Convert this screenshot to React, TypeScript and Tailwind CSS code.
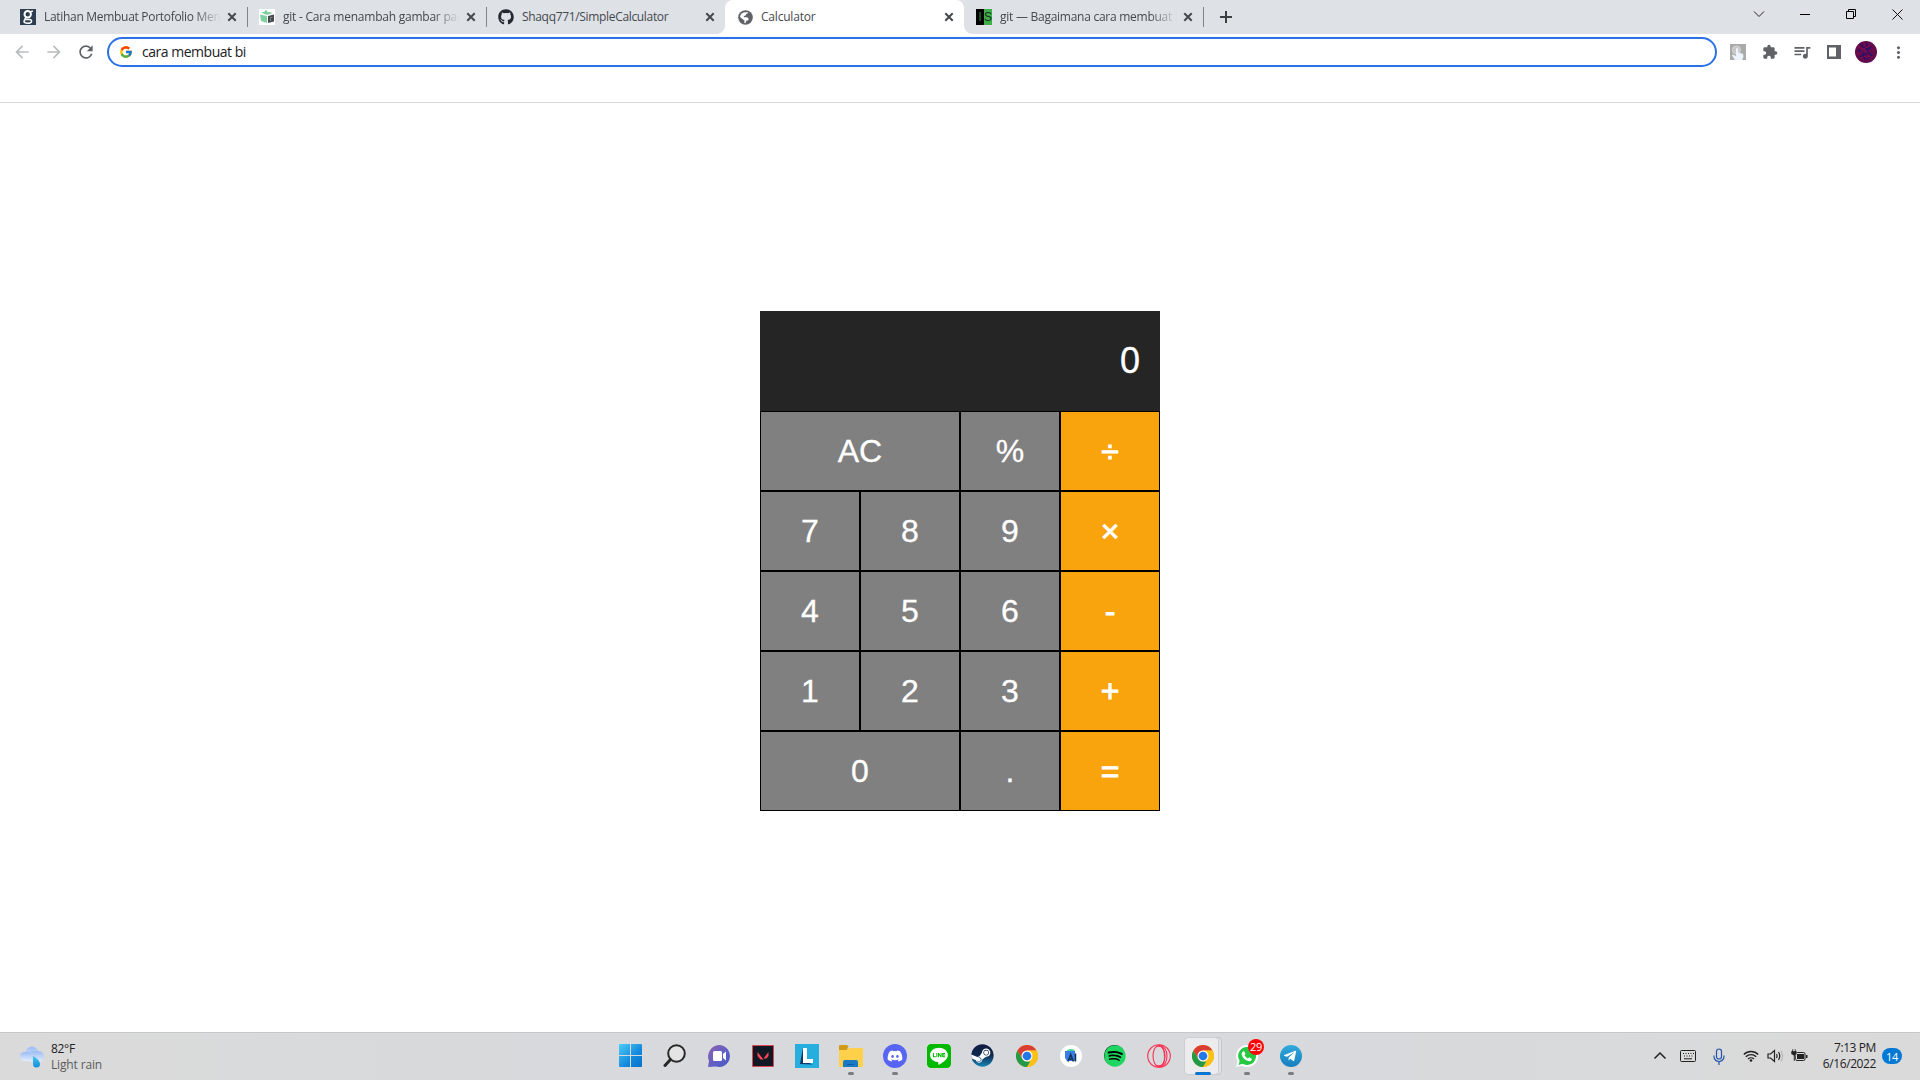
import type { ReactNode } from 'react';
import { FaDiscord, FaGithub, FaLine, FaSpotify, FaSteam, FaTelegramPlane } from 'react-icons/fa';
import { FcGoogle } from 'react-icons/fc';
import { MdArrowBack, MdArrowForward, MdExtension, MdMoreVert, MdQueueMusic, MdRefresh } from 'react-icons/md';

function Cross() {
  return (
    <svg width="16" height="16" viewBox="0 0 16 16" stroke="#45494d" strokeWidth="2" className="shrink-0">
      <path d="M4.3 4.3l7.4 7.4M11.7 4.3l-7.4 7.4" />
    </svg>
  );
}

const favicons: ReactNode[] = [
  <svg width="16" height="16" viewBox="0 0 16 16" fill="none" stroke="#fff" strokeWidth="2">
    <path fill="#2d3e50" stroke="none" d="M0 0h16v16H0z" />
    <circle cx="7.700" cy="5.300" r="3.200" />
    <path d="M10 3l2.800-1M6 8.500q-2 1.500 0 2h3.500q2.500.3 2 2.200-.6 1.600-3.700 1.600-3.800 0-3.800-2 0-1.500 2-1.800" strokeWidth="1.500" />
  </svg>,
  <svg width="16" height="16" viewBox="0 0 16 16">
    <path fill="#fff" d="M0 0h16v16H0z" />
    <path fill="#7fcea0" d="M1 5.500l7 1.500v7l-6-2zM2 3.500l4-1V1h1l1 1.500 6 1.500-6 2z" />
    <path fill="#474a4d" d="M9 7l6-1.500v7L9 14z" />
    <path d="M11 9l2.500-.8M11.500 12V9.500" stroke="#81868a" />
  </svg>,
  <FaGithub size={16} color="#24292f" />,
  <svg width="15" height="15" viewBox="0 0 15 15">
    <circle cx="7.500" cy="7.500" r="7.300" fill="#5f6368" />
    <path fill="#fff" d="M7 2.200h3.200q-.4 1.600-2 1.700L7.600 5.500 6 6l-.3 1.200h3.500l1.600 1.800-.6 1.200-1.900.5-.8 2.600-1.200-.6.200-2.300-3.300-2.500L2 7q.2-4 5-4.800z" />
  </svg>,
  <div className="flex h-4 w-4 bg-black font-['Liberation_Sans',sans-serif] text-[13px] leading-[16px]">
    <span className="w-2 text-center text-[#287a37]">I</span>
    <span className="w-2 bg-[#41ad4b] text-center text-[12px] text-[#0d3817]">S</span>
  </div>,
];

const tabs = [
  { title: 'Latihan Membuat Portofolio Men', w: 'tracking-[-0.3px]', fade: true, sep: true },
  { title: 'git - Cara menambah gambar pad', w: 'tracking-[-0.23px]', fade: true, sep: true },
  { title: 'Shaqq771/SimpleCalculator', w: 'tracking-[-0.33px]', fade: false, sep: false },
  { title: 'Calculator', w: 'tracking-[-0.2px]', fade: false, sep: false },
  { title: 'git — Bagaimana cara membuat f', w: 'tracking-[-0.26px]', fade: true, sep: true },
];

function TabStrip() {
  return (
    <div className="flex h-[34px] bg-[#dee1e6] pl-2">
      {tabs.map((t, i) => {
        const active = i === 3;
        return (
          <div
            key={i}
            className={`relative flex h-[34px] w-[239px] shrink-0 items-center pr-[7px] pl-3 ${active ? 'rounded-t-lg bg-white' : ''}`}
          >
            {active && (
              <>
                <span className="absolute bottom-0 -left-2 h-2 w-2 bg-[radial-gradient(circle_at_0_0,#dee1e6_7.5px,white_8px)]" />
                <span className="absolute -right-2 bottom-0 h-2 w-2 bg-[radial-gradient(circle_at_100%_0,#dee1e6_7.5px,white_8px)]" />
              </>
            )}
            <span className="flex h-4 w-4 shrink-0 items-center justify-center">{favicons[i]}</span>
            <span
              className={`ml-2 h-[18px] w-[180px] text-[12px] leading-[18px] whitespace-nowrap text-[#45494e] ${
                t.fade ? '[mask-image:linear-gradient(to_right,black_150px,transparent_177px)]' : ''
              } ${t.w}`}
            >
              {t.title}
            </span>
            <Cross />
            {t.sep && <span className="absolute top-[7px] -right-px h-5 w-px bg-[#808488]" />}
          </div>
        );
      })}
      <svg width="16" height="16" viewBox="0 0 16 16" className="mt-[9px] ml-[15px]" stroke="#3c4043" strokeWidth="2">
        <path d="M2 8h12M8 2v12" />
      </svg>
      <div className="ml-auto flex h-7 items-center">
        <span className="flex w-[46px] justify-center">
          <svg width="12" height="12" viewBox="0 0 12 12" fill="none" stroke="#222">
            <path d="M1 3.5l5 5 5-5" />
          </svg>
        </span>
        <span className="flex w-[46px] justify-center">
          <span className="h-px w-[10px] bg-black" />
        </span>
        <span className="flex w-[46px] justify-center">
          <svg width="10" height="10" viewBox="0 0 10 10" fill="none" stroke="#000">
            <path d="M.5 2.5h7v7h-7zM2.5 2.5v-2h7v7h-2" />
          </svg>
        </span>
        <span className="flex w-[46px] justify-center">
          <svg width="11" height="11" viewBox="0 0 11 11" stroke="#111">
            <path d="M.5.5l10 10M10.5.5l-10 10" />
          </svg>
        </span>
      </div>
    </div>
  );
}

function Slot({ children }: { children: ReactNode }) {
  return <span className="flex w-8 shrink-0 items-center justify-center">{children}</span>;
}

function Toolbar() {
  return (
    <div className="h-[69px] border-b border-[#d9dadc] bg-white pt-[3px]">
      <div className="flex h-[30px] items-center pr-[6px] pl-[6px]">
        <Slot><MdArrowBack size={20} color="#babcbe" /></Slot>
        <Slot><MdArrowForward size={20} color="#babcbe" /></Slot>
        <Slot><MdRefresh size={20} color="#5f6368" /></Slot>
        <div className="ml-[5px] flex h-[30px] w-[1610px] items-center rounded-full border-2 border-[#2a72e5] pl-[10px]">
          <FcGoogle size={14} />
          <span className="ml-[9px] text-[14px] leading-[20px] tracking-[-0.48px] text-[#202124]">cara membuat bi</span>
        </div>
        <div className="ml-[5px] flex">
          <Slot>
            <svg width="16" height="16" viewBox="0 0 16 16">
              <path fill="#aaa" d="M0 0h16v16H0z" />
              <circle cx="6.500" cy="6" r="4" fill="#c6c6c6" stroke="#d8d8d8" />
              <path fill="#edf3fc" d="M6 4.500q1.200-1.200 2.200 0v4l5 1.500q1 3-1 6H5l-3-4.500 1-1 3 1.500z" />
            </svg>
          </Slot>
          <Slot><MdExtension size={16} color="#5f6368" /></Slot>
          <Slot><MdQueueMusic size={20} color="#5f6368" /></Slot>
          <Slot>
            <svg width="14" height="14" viewBox="0 0 14 14">
              <path fill="#5f6368" d="M0 0h14v14H0z" />
              <path fill="#fff" d="M2 2.500h7v9H2z" />
            </svg>
          </Slot>
          <Slot>
            <svg width="22" height="22" viewBox="0 0 22 22">
              <circle cx="11" cy="11" r="11" fill="#640b4b" />
              <g fill="none" stroke="#23106f" strokeWidth="1.300">
                <path d="M6 3l7 8 5 5M3 9l5 3 2 7M12 2l-1 5 5 3M16 5l-5 8-7 3M12 19l3-5" />
              </g>
              <g fill="none" stroke="#a00c43" strokeWidth="1" strokeDasharray="2 2">
                <path d="M3 6l5 2 7-4M2 13l7-3 9-1M5 17l6-2 7 1M9 3l1 6 6 8" />
              </g>
            </svg>
          </Slot>
          <Slot><MdMoreVert size={19} color="#5f6368" /></Slot>
        </div>
      </div>
    </div>
  );
}

const keys = ['AC', '%', '÷', '7', '8', '9', '×', '4', '5', '6', '-', '1', '2', '3', '+', '0', '.', '='];

function Calculator() {
  return (
    <div className="w-[400px] font-['Liberation_Sans',Arial,sans-serif] text-white">
      <div className="flex h-[100px] items-center justify-end bg-[#252525] pr-5 text-[36px] leading-none [-webkit-text-stroke:0.3px_white]">0</div>
      <div className="grid grid-cols-4">
        {keys.map((k) => (
          <button
            key={k}
            className={`h-20 border border-black text-[32px] leading-none ${
              k === 'AC' || k === '0' ? 'col-span-2' : ''
            } ${
              '÷×-+='.includes(k)
                ? 'bg-[#f9a30d] pb-px [-webkit-text-stroke:0.9px_white]'
                : 'bg-[#808080] [-webkit-text-stroke:0.3px_white]'
            }`}
          >
            {k}
          </button>
        ))}
      </div>
    </div>
  );
}

function ChromeIcon() {
  return (
    <svg width="22" height="22" viewBox="0 0 48 48">
      <circle cx="24" cy="24" r="24" fill="#fbc116" />
      <path fill="#dc3d32" d="M3.200 12A24 24 0 0 1 44.800 12H24L13.600 30z" />
      <path fill="#249a48" d="M3.200 12l10.400 18L24 36h10.400L24 48A24 24 0 0 1 3.200 12z" />
      <path fill="#fbc116" d="M44.800 12A24 24 0 0 1 24 48l10.400-18L36 24l-12-12z" />
      <circle cx="24" cy="24" r="12" fill="#fff" />
      <circle cx="24" cy="24" r="9.500" fill="#2479e8" />
    </svg>
  );
}

const apps: { icon: ReactNode; open?: boolean }[] = [
  {
    icon: (
      <svg width="23" height="23" viewBox="0 0 23 23" className="mr-px">
        <defs>
          <linearGradient id="win" x2="1" y2="1">
            <stop stopColor="#4cccf8" />
            <stop offset=".6" stopColor="#1389dc" />
            <stop offset="1" stopColor="#0671cb" />
          </linearGradient>
        </defs>
        <path fill="url(#win)" d="M1 0h10v11H0V1q0-1 1-1zM12 0h10q1 0 1 1v10H12zM0 12h11v11H1q-1 0-1-1zM12 12h11v10q0 1-1 1H12z" />
      </svg>
    ),
  },
  {
    icon: (
      <svg width="24" height="24" viewBox="0 0 24 24" fill="none" stroke="#282828">
        <circle cx="13.500" cy="9.500" r="8.300" fill="#e4e4e5" strokeWidth="2" />
        <path d="M7.500 15.500l-5.500 6" strokeWidth="3" strokeLinecap="round" />
      </svg>
    ),
  },
  {
    icon: (
      <svg width="24" height="24" viewBox="0 0 24 24" className="mr-px">
        <defs>
          <linearGradient id="meet" x2="1" y2="1">
            <stop stopColor="#9362ad" />
            <stop offset=".6" stopColor="#5b5fc7" />
            <stop offset="1" stopColor="#5055c0" />
          </linearGradient>
        </defs>
        <path fill="url(#meet)" d="M12 1a11 11 0 1 1-3 21.600L1 23l1-6A11.500 11.500 0 0 1 12 1z" />
        <rect x="6" y="7" width="9" height="10" rx="1.500" fill="#fff" />
        <path fill="#fff" d="M16 10l3-2.500v9L16 14z" />
      </svg>
    ),
  },
  {
    icon: (
      <svg width="22" height="22" viewBox="0 0 22 22">
        <path fill="#101923" stroke="#d74957" d="M.5.5h21v21H.5z" />
        <path fill="#ff4656" d="M5.500 7l6 7.500H8.500L5.500 11zM16.500 7v4L14.500 13.500h-3z" />
      </svg>
    ),
  },
  {
    icon: (
      <svg width="24" height="24" viewBox="0 0 24 24">
        <path fill="#25aede" d="M0 0h24v24H0z" />
        <path fill="#12386b" d="M8 4L5 20l13 .500L8 17z" />
        <path fill="#fff" d="M8 4h4v11h6v4H8z" />
      </svg>
    ),
  },
  {
    open: true,
    icon: (
      <svg width="24" height="22" viewBox="0 0 24 22">
        <path fill="#d29b16" d="M0 1q0-1 1-1h7l2 2h-1L8 5H0z" />
        <path fill="#ffd04a" d="M0 5h8l2-2h13q1 0 1 1v18H0z" />
        <path fill="#1a79c4" d="M4 22v-5q0-2 2-2h11q2 0 2 2v5z" />
        <path fill="#0d5ca1" d="M8 19h7v1H8z" />
      </svg>
    ),
  },
  {
    open: true,
    icon: (
      <span className="flex h-6 w-6 items-center justify-center rounded-full bg-[#5865f2]">
        <FaDiscord size={16} color="#fff" />
      </span>
    ),
  },
  {
    icon: (
      <span className="flex h-6 w-6 items-center justify-center overflow-hidden rounded-[4px] bg-white">
        <FaLine size={28} color="#00b900" className="shrink-0" />
      </span>
    ),
  },
  {
    icon: (
      <span className="mr-px flex h-[21px] w-[21px] items-center justify-center rounded-full bg-white">
        <svg width="0" height="0" className="absolute">
          <defs>
            <linearGradient id="steam" x2="0" y2="1">
              <stop stopColor="#101b41" />
              <stop offset=".5" stopColor="#102a50" />
              <stop offset="1" stopColor="#1686b7" />
            </linearGradient>
          </defs>
        </svg>
        <FaSteam size={23} className="shrink-0 [&_path]:fill-[url(#steam)]" />
      </span>
    ),
  },
  { icon: <ChromeIcon /> },
  {
    icon: (
      <svg width="22" height="22" viewBox="0 0 22 22">
        <circle cx="11" cy="11" r="11" fill="#fff" />
        <path fill="#45d49a" d="M6 7q1-3 5-3t4 3z" />
        <path fill="#397de5" d="M5 6h10v10H7l-2-3z" />
        <path d="M8 16.500l2.700-7 2.700 7M9 14h3.500M15.500 8.500v8" stroke="#123354" strokeWidth="1.500" fill="none" />
      </svg>
    ),
  },
  {
    icon: (
      <span className="mr-px flex h-[21px] w-[21px] items-center justify-center rounded-full bg-black">
        <FaSpotify size={22} color="#1ed760" className="shrink-0" />
      </span>
    ),
  },
  {
    icon: (
      <svg width="24" height="24" viewBox="0 0 24 24" fill="none" stroke="#fa3456" strokeWidth="1.100">
        <circle cx="12" cy="12" r="11.300" />
        <ellipse cx="12" cy="12" rx="6" ry="10.500" />
        <path d="M10 2.500q7-2 7.500 9.500T10 21.500" />
        <path d="M12 .700q8 2 8 11.300t-8 11.300" />
      </svg>
    ),
  },
  { icon: <ChromeIcon /> },
  {
    open: true,
    icon: (
      <span className="relative flex h-6 w-6 items-center justify-center">
        <svg width="22" height="22" viewBox="0 0 22 22">
          <path fill="#fff" d="M11 0a11 11 0 1 1-5 20.700L0 22l1.600-5.500A11 11 0 0 1 11 0z" />
          <path fill="#25c941" d="M11 2a9 9 0 1 1-4.500 16.800L2.500 20l1.200-4A9 9 0 0 1 11 2z" />
          <path fill="#fff" d="M8 6l1.500 3-1 1.200q1.500 2.300 3.500 3.300l1.200-1.200L16 14q-.5 2.500-3 2.300Q7 15 5.500 9 5.800 6.500 8 6z" />
        </svg>
        <span className="absolute -top-[5px] left-[13px] flex h-4 w-4 items-center justify-center rounded-full bg-[#fa0505] text-[11px] leading-none tracking-[-0.3px] text-white">
          29
        </span>
      </span>
    ),
  },
  {
    open: true,
    icon: (
      <span className="flex h-[22px] w-[22px] items-center justify-center rounded-full bg-linear-to-b from-[#31aadd] to-[#167ebd]">
        <FaTelegramPlane size={14} color="#fff" className="mr-[2px]" />
      </span>
    ),
  },
];

function Taskbar() {
  return (
    <div className="grid h-12 grid-cols-[608px_704px_608px] border-t border-[#c6c7c8] bg-[#d9dadc] bg-linear-to-r from-[#dadada] via-[#d7d9dd] to-[#dadada]">
      <div className="flex items-center pl-5">
        <svg width="24" height="22" viewBox="0 0 24 22">
          <defs>
            <linearGradient id="cloud" x2="0" y2="1">
              <stop stopColor="#9bbcf4" />
              <stop offset="1" stopColor="#e4edfc" />
            </linearGradient>
            <linearGradient id="drop" x2="0" y2="1">
              <stop stopColor="#44c7f0" />
              <stop offset="1" stopColor="#168dde" />
            </linearGradient>
          </defs>
          <circle cx="12" cy="7" r="6.500" fill="url(#cloud)" />
          <rect x="0" y="6" width="12" height="9" rx="4.500" fill="url(#cloud)" />
          <rect x="7" y="5" width="17" height="11" rx="5.500" fill="url(#cloud)" />
          <path fill="url(#drop)" d="M13 10q7 4 7 8a3.500 3.500 0 0 1-7 0z" />
        </svg>
        <div className="ml-[7px] text-[12px] leading-4 text-[#222]">
          <div className="tracking-[-0.3px]">82°F</div>
          <div className="tracking-[-0.15px] text-[#5a5c5c]">Light rain</div>
        </div>
      </div>
      <div className="flex">
        {apps.map((a, i) => (
          <div key={i} className="relative flex h-[45px] w-11 items-center justify-center">
            {i === 13 && (
              <>
                <span className="absolute top-1 left-[8px] h-[38px] w-[34px] rounded-[4px] border border-[#c5c6c9] bg-[#e0e1e3]" />
                <span className="absolute top-1 left-[4px] h-[38px] w-[35px] rounded-[4px] border border-[#cccdcf] bg-[#ececee]" />
                <span className="absolute top-[39px] left-[15px] h-[3px] w-4 rounded-full bg-[#0875d1]" />
              </>
            )}
            <span className="relative left-[1px] flex">{a.icon}</span>
            {a.open && <span className="absolute top-[39px] left-5 h-[3px] w-[6px] rounded-full bg-[#7b7c7e]" />}
          </div>
        ))}
      </div>
      <div className="flex h-[46px] items-center justify-end pr-[18px]">
        <svg width="14" height="14" viewBox="0 0 14 14" fill="none" stroke="#222" strokeWidth="1.500" className="mr-[13px]">
          <path d="M1.500 9.500L7 4l5.500 5.500" />
        </svg>
        <svg width="16" height="12" viewBox="0 0 16 12" fill="none" stroke="#222" className="mr-[17px]">
          <rect x=".5" y=".5" width="15" height="11" rx="1" />
          <path d="M3 3.500h11M4 6h9" strokeDasharray="1 1.500" />
          <path d="M4 8.800h8" />
        </svg>
        <svg width="12" height="17" viewBox="0 0 12 17" fill="none" stroke="#2154a8" strokeWidth="1.200" className="mr-[18px]">
          <rect x="3.500" y="1" width="5" height="10" rx="2.500" />
          <path d="M1 7.500v1a5 5 0 0 0 10 0v-1M6 13.500V17" />
        </svg>
        <svg width="16" height="14" viewBox="0 0 16 14" fill="none" stroke="#222" strokeWidth="1.300" className="mr-[8px]">
          <path d="M.8 5.500a10.200 10.200 0 0 1 14.400 0M2.800 7.800a7.400 7.400 0 0 1 10.400 0M5 10a4.300 4.300 0 0 1 6 0" />
          <circle cx="8" cy="11.500" r="1.300" fill="#222" stroke="none" />
        </svg>
        <svg width="18" height="14" viewBox="0 0 18 14" fill="none" stroke="#222" strokeWidth="1.200" className="mr-[6px]">
          <path d="M1 5h2.500L7.500 1.500v11L3.500 9H1z" />
          <path d="M9.500 5q1.200 2 0 4M11.500 3q2.500 4 0 8" />
          <path d="M13.800 1.500q3.500 5.500 0 11" stroke="#b6b6b6" />
        </svg>
        <svg width="17" height="14" viewBox="0 0 17 14" className="mr-[1px]">
          <rect x="4.500" y="3.500" width="9.500" height="8" rx="1.500" fill="none" stroke="#222" />
          <path fill="#222" d="M6 5h7v5H6zM15 6h1.500v3H15z" />
          <path fill="#222" stroke="#dadada" strokeWidth=".5" d="M0 2h1V0h1.300v2h1.300V0h1.300v2h1v3L4 6.500V12H2.500V6.500L0 5z" />
        </svg>
        <div className="w-[67px] text-right text-[12px] leading-4 tracking-[-0.4px] text-[#222]">
          <div>7:13 PM</div>
          <div>6/16/2022</div>
        </div>
        <span className="ml-[6px] flex h-4 w-5 items-center justify-center rounded-full bg-[#0078d4] text-[11px] leading-none tracking-[-0.3px] text-white">14</span>
      </div>
    </div>
  );
}

export default function App() {
  return (
    <div className="flex h-[1080px] w-[1920px] flex-col overflow-hidden bg-white font-['Open_Sans','Noto_Sans',sans-serif]">
      <TabStrip />
      <Toolbar />
      <main className="flex flex-1 justify-center pt-52">
        <Calculator />
      </main>
      <Taskbar />
    </div>
  );
}
